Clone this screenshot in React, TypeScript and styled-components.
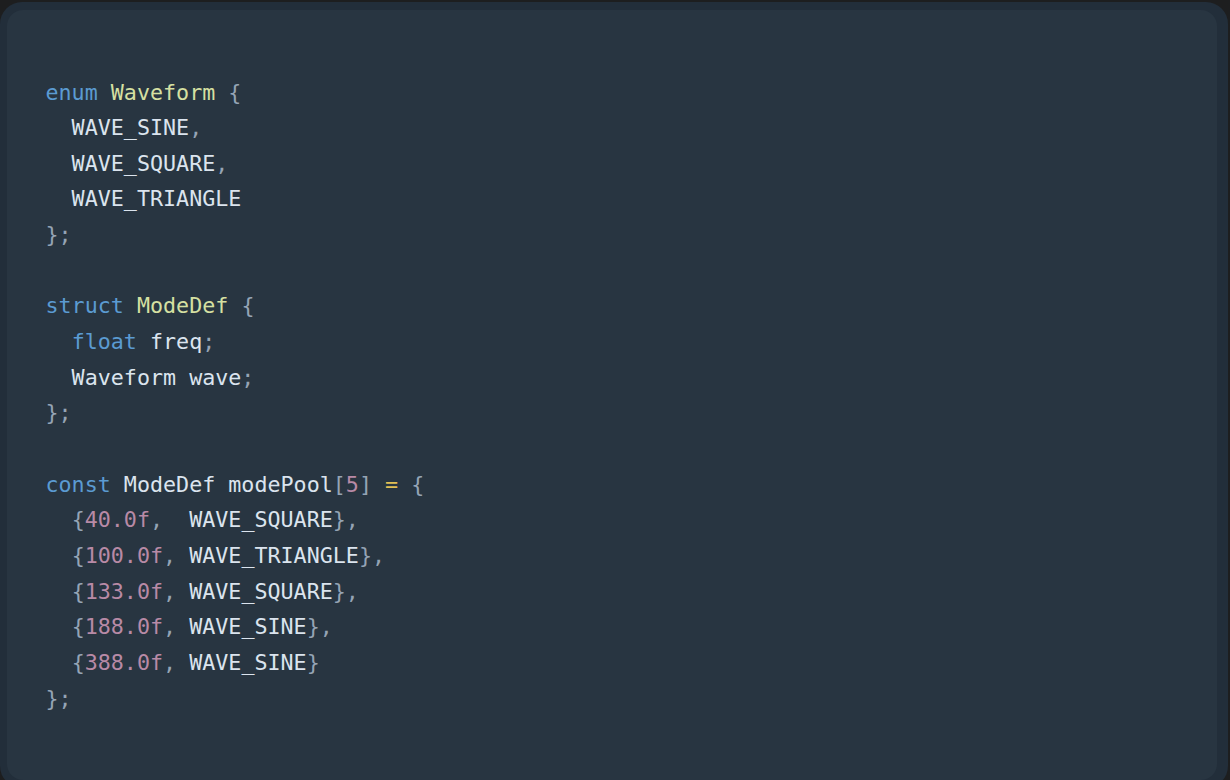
import React from "react";
import styled, { createGlobalStyle } from "styled-components";

const Global = createGlobalStyle`
  html, body { margin: 0; padding: 0; background: #1d1e1f; overflow: hidden; }
`;

const Frame = styled.div`
  margin: 2px 2px 0 0;
  padding: 8px 11px 8px 7px;
  background: #222e3a;
  border-radius: 22px;
`;

const Code = styled.pre`
  margin: 0;
  height: 770px;
  box-sizing: border-box;
  padding: 64.5px 39px 0 38.5px;
  background: #283541;
  border-radius: 16px;
  font-family: "DejaVu Sans Mono", monospace;
  font-size: 21.7px;
  line-height: 35.65px;
  color: #dbe4ee;
`;

type Kind = "kw" | "type" | "id" | "punc" | "num" | "op";

const colors: Record<Kind, string> = {
  kw: "#5b9bd2",
  type: "#d6e0a2",
  id: "#dbe4ee",
  punc: "#95a4b5",
  num: "#b88aa6",
  op: "#e2bf54",
};

const Tok = styled.span<{ $k: Kind }>`
  color: ${(p) => colors[p.$k]};
`;

const Line = styled.div`
  min-height: 35.65px;
  white-space: pre;
`;

type T = [Kind, string];
const lines: T[][] = [
  [["kw", "enum"], ["id", " "], ["type", "Waveform"], ["id", " "], ["punc", "{"]],
  [["id", "  WAVE_SINE"], ["punc", ","]],
  [["id", "  WAVE_SQUARE"], ["punc", ","]],
  [["id", "  WAVE_TRIANGLE"]],
  [["punc", "};"]],
  [],
  [["kw", "struct"], ["id", " "], ["type", "ModeDef"], ["id", " "], ["punc", "{"]],
  [["id", "  "], ["kw", "float"], ["id", " freq"], ["punc", ";"]],
  [["id", "  Waveform wave"], ["punc", ";"]],
  [["punc", "};"]],
  [],
  [
    ["kw", "const"],
    ["id", " ModeDef modePool"],
    ["punc", "["],
    ["num", "5"],
    ["punc", "]"],
    ["id", " "],
    ["op", "="],
    ["id", " "],
    ["punc", "{"],
  ],
  [["id", "  "], ["punc", "{"], ["num", "40.0f"], ["punc", ","], ["id", "  WAVE_SQUARE"], ["punc", "},"]],
  [["id", "  "], ["punc", "{"], ["num", "100.0f"], ["punc", ","], ["id", " WAVE_TRIANGLE"], ["punc", "},"]],
  [["id", "  "], ["punc", "{"], ["num", "133.0f"], ["punc", ","], ["id", " WAVE_SQUARE"], ["punc", "},"]],
  [["id", "  "], ["punc", "{"], ["num", "188.0f"], ["punc", ","], ["id", " WAVE_SINE"], ["punc", "},"]],
  [["id", "  "], ["punc", "{"], ["num", "388.0f"], ["punc", ","], ["id", " WAVE_SINE"], ["punc", "}"]],
  [["punc", "};"]],
];

export default function App() {
  return (
    <>
      <Global />
      <Frame>
        <Code>
          {lines.map((l, i) => (
            <Line key={i}>
              {l.map(([k, t], j) => (
                <Tok key={j} $k={k}>
                  {t}
                </Tok>
              ))}
            </Line>
          ))}
        </Code>
      </Frame>
    </>
  );
}
